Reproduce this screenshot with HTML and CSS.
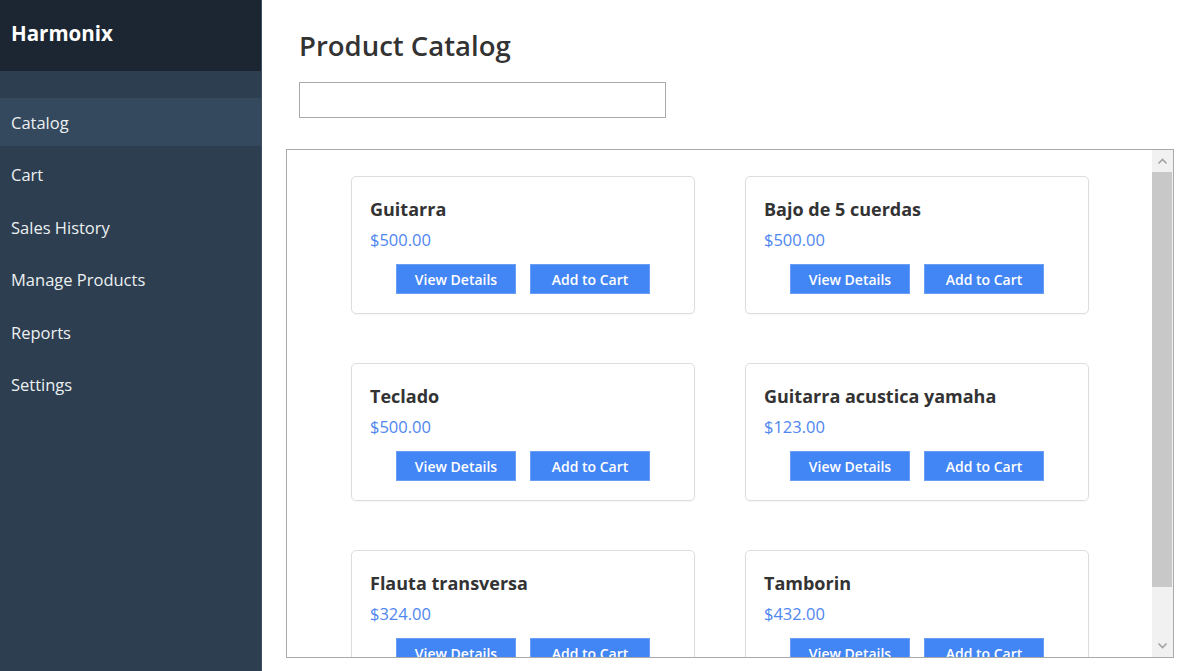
FILE: index.html
```html
<!DOCTYPE html>
<html lang="en">
<head>
<meta charset="utf-8">
<title>Harmonix</title>
<link rel="stylesheet" href="styles.css">
</head>
<body>
<div class="app">
  <aside class="sidebar">
    <div class="brand">Harmonix</div>
    <nav class="nav">
      <a class="nav-item active">Catalog</a>
      <a class="nav-item">Cart</a>
      <a class="nav-item">Sales History</a>
      <a class="nav-item">Manage Products</a>
      <a class="nav-item">Reports</a>
      <a class="nav-item">Settings</a>
    </nav>
  </aside>
  <main class="main">
    <div class="head">
      <h1 class="title">Product Catalog</h1>
      <input class="search" type="text">
    </div>
    <div class="scroller">
      <div class="viewport">
        <div class="grid">
          <div class="card">
            <h3 class="name">Guitarra</h3>
            <div class="price">$500.00</div>
            <div class="actions"><button class="btn">View Details</button><button class="btn">Add to Cart</button></div>
          </div>
          <div class="card">
            <h3 class="name">Bajo de 5 cuerdas</h3>
            <div class="price">$500.00</div>
            <div class="actions"><button class="btn">View Details</button><button class="btn">Add to Cart</button></div>
          </div>
          <div class="card">
            <h3 class="name">Teclado</h3>
            <div class="price">$500.00</div>
            <div class="actions"><button class="btn">View Details</button><button class="btn">Add to Cart</button></div>
          </div>
          <div class="card">
            <h3 class="name">Guitarra acustica yamaha</h3>
            <div class="price">$123.00</div>
            <div class="actions"><button class="btn">View Details</button><button class="btn">Add to Cart</button></div>
          </div>
          <div class="card">
            <h3 class="name">Flauta transversa</h3>
            <div class="price">$324.00</div>
            <div class="actions"><button class="btn">View Details</button><button class="btn">Add to Cart</button></div>
          </div>
          <div class="card">
            <h3 class="name">Tamborin</h3>
            <div class="price">$432.00</div>
            <div class="actions"><button class="btn">View Details</button><button class="btn">Add to Cart</button></div>
          </div>
        </div>
      </div>
      <div class="scrollbar">
        <div class="sb-btn"><svg width="21" height="22" viewBox="0 0 21 22"><path d="M6.5 13.5L10.5 9.5L14.5 13.5" fill="none" stroke="#a3a3a3" stroke-width="1.6"/></svg></div>
        <div class="sb-thumb"></div>
        <div class="sb-track"></div>
        <div class="sb-btn"><svg width="21" height="22" viewBox="0 0 21 22"><path d="M6.5 8.5L10.5 12.5L14.5 8.5" fill="none" stroke="#a3a3a3" stroke-width="1.6"/></svg></div>
      </div>
    </div>
  </main>
</div>
</body>
</html>
```
FILE: styles.css
```css
* { box-sizing: border-box; }
html, body { margin: 0; height: 100%; }
body {
  font-family: "Open Sans", "Noto Sans", "Liberation Sans", sans-serif;
  color: #333;
  background: #fff;
  overflow: hidden;
}
.app { display: flex; height: 100vh; }
.sidebar {
  width: 262px;
  flex: none;
  background: #2c3e50;
  border-right: 1px solid #3d4f61;
  display: flex;
  flex-direction: column;
}
.brand {
  height: 71px;
  background: #1c2633;
  color: #fff;
  font-size: 20.5px;
  font-weight: 700;
  padding: 20px 11px 0;
  line-height: 26px;
}
.nav { display: flex; flex-direction: column; padding-top: 27px; gap: 4.4px; }
.nav-item {
  display: block;
  height: 48px;
  line-height: 50px;
  padding: 0 11px;
  color: #ecf0f1;
  font-size: 16.5px;
  text-decoration: none;
}
.nav-item.active { background: #34495e; }
.main {
  flex: 1;
  display: flex;
  flex-direction: column;
  padding: 28px 11px 13px 24px;
  min-width: 0;
}
.head { padding-left: 13px; }
.title {
  margin: 0;
  font-size: 27.5px;
  line-height: 36px;
  font-weight: 600;
  color: #333;
}
.search {
  display: block;
  margin-top: 18px;
  width: 367px;
  height: 36px;
  border: 1px solid #aaa;
  background: #fff;
  padding: 0 8px;
  font: inherit;
}
.scroller {
  margin-top: 31px;
  flex: 1;
  min-height: 0;
  border: 1px solid #aaa;
  display: flex;
  overflow: hidden;
}
.viewport {
  flex: 1;
  min-width: 0;
  overflow: hidden;
}
.scrollbar {
  width: 21px;
  flex: none;
  background: #f1f1f1;
  display: flex;
  flex-direction: column;
}
.sb-btn { height: 22px; flex: none; display: flex; }
.sb-btn svg { display: block; }
.sb-thumb {
  height: 415px;
  flex: none;
  background: #c8c8c8;
  margin-right: 1px;
}
.sb-track { flex: 1; }
.grid {
  display: grid;
  grid-template-columns: 344px 344px;
  gap: 49px 50px;
  justify-content: center;
  padding: 26px 0 26px 1px;
}
.card {
  border: 1px solid #ddd;
  border-radius: 5px;
  padding: 20px 18px 19px;
  box-shadow: 0 1px 2px rgba(0,0,0,0.04);
}
.name {
  margin: 0 0 8px;
  font-size: 18px;
  line-height: 24px;
  font-weight: 700;
  color: #333;
}
.price {
  font-size: 16.5px;
  line-height: 22px;
  color: #4f86ef;
}
.actions {
  margin-top: 13px;
  display: flex;
  justify-content: center;
  gap: 14px;
}
.btn {
  width: 120px;
  height: 30px;
  border: 1px solid #6a9ef5;
  background: #4285f4;
  color: #fff;
  font-family: inherit;
  font-size: 14px;
  font-weight: 600;
  padding: 0;
}
```
